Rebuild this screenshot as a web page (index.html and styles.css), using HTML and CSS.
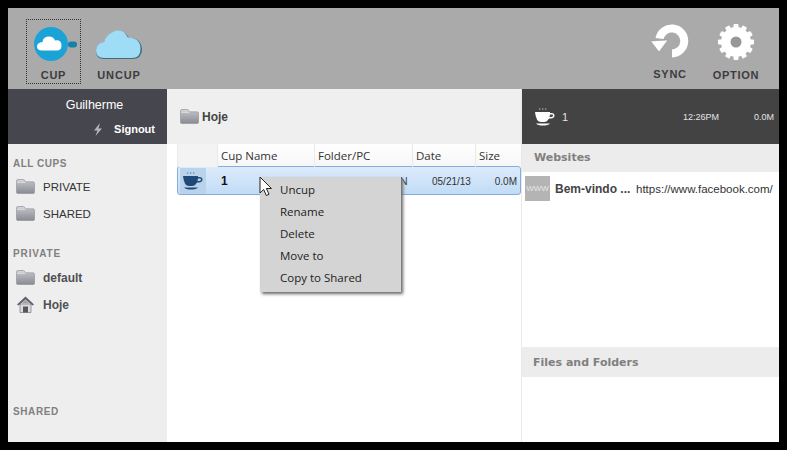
FILE: index.html
```html
<!DOCTYPE html>
<html lang="en">
<head>
<meta charset="utf-8">
<title>Cup</title>
<link rel="stylesheet" href="styles.css">
</head>
<body>
<svg class="defs" width="0" height="0" aria-hidden="true">
  <defs>
    <linearGradient id="fg" x1="0" y1="0" x2="0" y2="1"><stop offset="0" stop-color="#c6c7cb"/><stop offset="1" stop-color="#898b93"/></linearGradient>
    <symbol id="folder" viewBox="0 0 19 15">
      <path d="M.5 13.500V2Q.5 .5 2 .5H7Q8.500 .5 9 2L9.400 2.800H17Q18.500 2.800 18.500 4.300V13.500Q18.500 14.500 17 14.500H2Q.5 14.500 .5 13.500Z" fill="url(#fg)" stroke="#8d8f95" stroke-width=".6"/>
      <path d="M1 3.200H9.500" stroke="#f0f0f2" stroke-width=".8" fill="none"/>
      <path d="M1.500 1.800H8" stroke="#dcdce0" stroke-width=".8" fill="none"/>
    </symbol>
    <symbol id="cup" viewBox="0 0 22 20">
      <path d="M6 3q-1-1 0-2M9 3q-1-1 0-2M12 3q-1-1 0-2" fill="none" stroke="currentColor" stroke-width=".8" opacity=".6"/>
      <path d="M1 5H16V6H17.500Q20.500 6 20.500 8.500T17 11.500H15Q13 15 10 15H7Q2 15 1 5ZM16 7.500L15.500 10H17Q19 10 19 8.500T17.500 7.500Z" fill="currentColor" fill-rule="evenodd"/>
      <path d="M2 16.500H16Q14 18.500 9 18.500T2 16.500Z" fill="currentColor"/>
    </symbol>
  </defs>
</svg>
<div class="app">
  <header class="toolbar">
    <div class="tool tool-cup focused">
      <svg class="tool-icon" width="48" height="38" viewBox="0 0 48 38">
        <rect x="36" y="15.500" width="9" height="6" rx="3" fill="#1381a8"/>
        <circle cx="19" cy="18" r="17" fill="#1ba2d6"/>
        <path d="M10 24.500Q5 24.500 5 20.500T10.500 16Q11 10.500 17 10.500Q21.500 10.500 23 14.500Q29.500 13.500 29.500 19.500Q29.500 24.500 25 24.500Z" fill="#fff"/>
      </svg>
      <span class="tool-label">CUP</span>
    </div>
    <div class="tool tool-uncup">
      <svg class="tool-icon" width="48" height="34" viewBox="0 0 48 34">
        <path d="M9 32Q1 32 1 24T9 15.500Q11 8 17 6Q27 -1 34 11Q46 11 47 22Q47 32 37 32Z" fill="#3f6b80"/>
        <path d="M9 31Q1 31 1 23.500T9 15Q11 8 17 5.500Q27 -1 33 10.500Q45.500 11 45.500 21.500Q45.500 31 37 31Z" fill="#9fdcf5"/>
      </svg>
      <span class="tool-label">UNCUP</span>
    </div>
    <div class="tool-spacer"></div>
    <div class="tool tool-sync">
      <svg class="tool-icon" width="40" height="34" viewBox="0 0 40 34">
        <path d="M22 33.500A16.500 16.500 0 1 0 5.500 14L13.500 15A8.500 8.500 0 1 1 22 25.500Z" fill="#fff"/>
        <path d="M.5 17L18 16L9 28Z" fill="#fff" stroke="#8a8a8a" stroke-width=".5"/>
      </svg>
      <span class="tool-label">SYNC</span>
    </div>
    <div class="tool tool-option">
      <svg class="tool-icon" width="38" height="38" viewBox="0 0 38 38">
        <g fill="#fff">
          <circle cx="19" cy="19" r="15"/>
          <rect x="16.500" y="1" width="5" height="36" rx="1"/>
          <rect x="16.500" y="1" width="5" height="36" rx="1" transform="rotate(30 19 19)"/>
          <rect x="16.500" y="1" width="5" height="36" rx="1" transform="rotate(60 19 19)"/>
          <rect x="16.500" y="1" width="5" height="36" rx="1" transform="rotate(90 19 19)"/>
          <rect x="16.500" y="1" width="5" height="36" rx="1" transform="rotate(120 19 19)"/>
          <rect x="16.500" y="1" width="5" height="36" rx="1" transform="rotate(150 19 19)"/>
        </g>
        <circle cx="19" cy="19" r="5.500" fill="#979797"/>
      </svg>
      <span class="tool-label">OPTION</span>
    </div>
  </header>
  <div class="columns">
    <aside class="sidebar">
      <div class="user">
        <div class="user-name">Guilherme</div>
        <div class="signout">
          <svg width="10" height="13" viewBox="0 0 10 13"><path d="M7 0L1 7.500H4.500L2.500 13L9 5.500H5.500Z" fill="#b5b5b8"/></svg>
          <span>Signout</span>
        </div>
      </div>
      <nav class="nav">
        <div class="nav-title">ALL CUPS</div>
        <div class="nav-item"><svg class="folder" width="19" height="15"><use href="#folder"/></svg><span class="caps">PRIVATE</span></div>
        <div class="nav-item"><svg class="folder" width="19" height="15"><use href="#folder"/></svg><span class="caps">SHARED</span></div>
        <div class="nav-title second">PRIVATE</div>
        <div class="nav-item"><svg class="folder" width="19" height="15"><use href="#folder"/></svg><span>default</span></div>
        <div class="nav-item"><svg class="folder" width="19" height="17" viewBox="0 0 19 17"><path d="M4 8H15V16.500H4Z" fill="#dcdcdf" stroke="#77797f" stroke-width=".7"/><path d="M9.500 .5L1 8.500L2.500 9.500L9.500 3.500L16.500 9.500L18 8.500Z" fill="#5f6167"/><path d="M9.500 3.500L5.500 7.500H13.500Z" fill="#a2a4aa"/><path d="M7 10.500H12V16.500H7Z" fill="#55575d"/></svg><span>Hoje</span></div>
        <div class="nav-title shared">SHARED</div>
      </nav>
    </aside>
    <main class="center">
      <div class="crumb"><svg class="folder" width="19" height="15"><use href="#folder"/></svg><span>Hoje</span></div>
      <div class="table">
        <div class="thead">
          <span class="c-icon"></span>
          <span class="c-name">Cup Name</span>
          <span class="c-folder">Folder/PC</span>
          <span class="c-date">Date</span>
          <span class="c-size">Size</span>
        </div>
        <div class="row">
          <span class="c-icon row-icon"><svg width="22" height="20"><use href="#cup"/></svg></span>
          <span class="c-name row-name">1</span>
          <span class="c-folder row-folder">N</span>
          <span class="c-date row-date">05/21/13</span>
          <span class="c-size row-size">0.0M</span>
        </div>
      </div>
      <ul class="menu">
        <li>Uncup</li>
        <li>Rename</li>
        <li>Delete</li>
        <li>Move to</li>
        <li>Copy to Shared</li>
      </ul>
      <svg class="pointer" width="14" height="21" viewBox="0 0 14 21"><path d="M1 1V17L4.700 13.500L7.300 19.500L10 18.300L7.400 12.500H12.500Z" fill="#fff" stroke="#222" stroke-width="1"/></svg>
    </main>
    <section class="detail">
      <div class="now">
        <svg class="now-cup" width="22" height="20"><use href="#cup"/></svg>
        <span class="now-name">1</span>
        <span class="now-time">12:26PM</span>
        <span class="now-size">0.0M</span>
      </div>
      <h2 class="pane-title">Websites</h2>
      <div class="sites">
        <div class="site">
          <span class="thumb">WWW</span>
          <span class="site-title">Bem-vindo ...</span>
          <span class="site-url">https://www.facebook.com/</span>
        </div>
      </div>
      <h2 class="pane-title files">Files and Folders</h2>
      <div class="files-body"></div>
    </section>
  </div>
</div>
</body>
</html>
```

FILE: styles.css
```css
* { box-sizing: border-box; }
html, body { margin: 0; height: 100%; }
body {
  background: #000;
  padding: 8px;
  font-family: "Liberation Sans", Arial, sans-serif;
  overflow: hidden;
}
.defs { position: absolute; }
.app {
  width: 771px;
  height: 434px;
  display: flex;
  flex-direction: column;
  background: #fff;
}
.toolbar {
  height: 81px;
  flex: none;
  background: #aaaaaa;
  display: flex;
  align-items: flex-start;
  padding: 11px 14px 0 18px;
}
.tool {
  display: flex;
  flex-direction: column;
  align-items: center;
  border: 1px dotted transparent;
}
.tool.focused { border-color: #333; }
.tool-cup { width: 55px; height: 65px; padding-top: 6px; }
.tool-cup .tool-icon { margin-left: 5px; }
.tool-cup .tool-label { margin-top: 5px; }
.tool-uncup { width: 54px; height: 65px; padding-top: 7px; margin-left: 11px; }
.tool-uncup .tool-label { margin-top: 8px; letter-spacing: .9px; }
.tool-spacer { flex: 1; }
.tool-sync { width: 46px; height: 65px; padding-top: 4px; }
.tool-option { width: 58px; height: 65px; padding-top: 3px; margin-left: 14px; }
.tool-label {
  font-size: 11px;
  font-weight: 700;
  letter-spacing: .7px;
  color: #3c3c3e;
  line-height: 13px;
  margin-top: 4px;
}
.tool-sync .tool-label { margin-top: 10px; }
.tool-option .tool-label { margin-top: 8px; }
.columns { flex: 1; display: flex; min-height: 0; }
.sidebar {
  width: 159px;
  flex: none;
  background: #eeeeee;
  display: flex;
  flex-direction: column;
}
.user {
  height: 55px;
  background: #46464e;
  color: #fff;
  font-size: 12.500px;
  padding: 9px 12px 0 0;
}
.user-name { text-align: center; padding-left: 26px; line-height: 15px; }
.signout {
  margin-top: 9px;
  display: flex;
  justify-content: flex-end;
  align-items: center;
  gap: 11px;
  font-size: 11px;
  font-weight: 700;
  line-height: 14px;
}
.nav { flex: 1; padding: 13px 0 0 5px; position: relative; }
.nav-title {
  font-size: 10px;
  font-weight: 700;
  color: #808080;
  letter-spacing: .5px;
  line-height: 13px;
}
.nav-title.second { margin-top: 20px; letter-spacing: .9px; }
.nav-title.shared { position: absolute; left: 5px; bottom: 24px; letter-spacing: .6px; }
.nav-item {
  height: 27px;
  display: flex;
  align-items: center;
  gap: 8px;
  padding-left: 3px;
  font-size: 12px;
  font-weight: 700;
  color: #505054;
}
.nav-title + .nav-item { margin-top: 3px; }
.nav-title.second + .nav-item { margin-top: 4px; }
.caps { font-weight: 400; font-size: 11.500px; color: #333; }
.center {
  flex: 1;
  min-width: 0;
  position: relative;
  border-right: 1px solid #e8e8e8;
}
.crumb {
  height: 55px;
  background: #efefef;
  display: flex;
  align-items: center;
  gap: 3px;
  padding: 0 0 0 13px;
  font-size: 12px;
  font-weight: 700;
  color: #444;
}
.crumb .folder { margin-top: -1px; }
.table { padding-left: 10px; font-family: "Open Sans", sans-serif; font-size: 11.500px; }
.thead {
  height: 23px;
  display: grid;
  grid-template-columns: 40px 97px 98px 63px 1fr;
  background: linear-gradient(#fff, #f6f6f6);
  color: #333;
  line-height: 23px;
}
.thead span { padding-left: 3px; border-left: 1px solid #e9e9e9; }
.thead .c-icon { background: #f3f3f3; }
.row {
  height: 29px;
  display: grid;
  grid-template-columns: 40px 97px 98px 63px 1fr;
  align-items: center;
  background: linear-gradient(#dcebfb, #c1dcf6);
  border: 1px solid #84acdd;
  border-radius: 3px;
  margin-top: -1px;
}
.row-icon { display: flex; justify-content: center; align-items: center; height: 26px; width: 26px; margin-left: 2px; background: #b9d3ec; color: #204a76; }
.row-name { padding: 1px 0 0 3px; font-family: "Liberation Sans", sans-serif; font-weight: 700; font-size: 12px; color: #111; }
.row-folder { text-align: right; padding-right: 5px; color: #444; }
.row-date { font-family: "Liberation Sans", sans-serif; font-size: 10px; color: #333; white-space: nowrap; padding: 1px 0 0 19px; }
.row-size { font-family: "Liberation Sans", sans-serif; font-size: 10px; color: #333; text-align: right; padding: 1px 3px 0 0; }
.menu {
  position: absolute;
  left: 93px;
  top: 88px;
  width: 141px;
  height: 115px;
  margin: 0;
  padding: 2px 0 0;
  list-style: none;
  background: #d4d4d4;
  box-shadow: 2px 2px 3px #666;
  font-family: "Open Sans", sans-serif;
  font-size: 11.500px;
  color: #222;
}
.menu li { height: 22px; line-height: 22px; padding-left: 20px; }
.pointer { position: absolute; left: 92px; top: 87px; }
.detail {
  width: 257px;
  flex: none;
  display: flex;
  flex-direction: column;
}
.now {
  height: 55px;
  flex: none;
  background: #434343;
  color: #e4e4e4;
  font-size: 9px;
  display: flex;
  align-items: center;
  padding: 0 5px 0 12px;
}
.now-cup { color: #fff; margin-top: 1px; }
.now-name { margin-left: 6px; flex: 1; font-size: 11px; }
.now-time { margin-right: 35px; }
.pane-title {
  margin: 0;
  flex: none;
  height: 28px;
  background: #ececec;
  color: #808080;
  font-family: "DejaVu Sans", sans-serif;
  font-size: 11px;
  font-weight: 700;
  line-height: 27px;
  padding-left: 12px;
}
.pane-title.files { height: 30px; line-height: 32px; padding-left: 11px; }
.sites { height: 175px; flex: none; padding-top: 4px; background: #fff; }
.site { display: flex; align-items: center; height: 25px; padding-left: 3px; }
.thumb {
  width: 25px;
  height: 25px;
  flex: none;
  background: #b4b4b4;
  color: #e8e8e8;
  font-size: 8px;
  line-height: 25px;
  text-align: center;
  overflow: hidden;
}
.site-title { margin-left: 5px; font-size: 12px; font-weight: 700; color: #444; width: 81px; white-space: nowrap; }
.site-url { font-size: 11.500px; color: #333; white-space: nowrap; }
.files-body { flex: 1; background: #fff; }
```
